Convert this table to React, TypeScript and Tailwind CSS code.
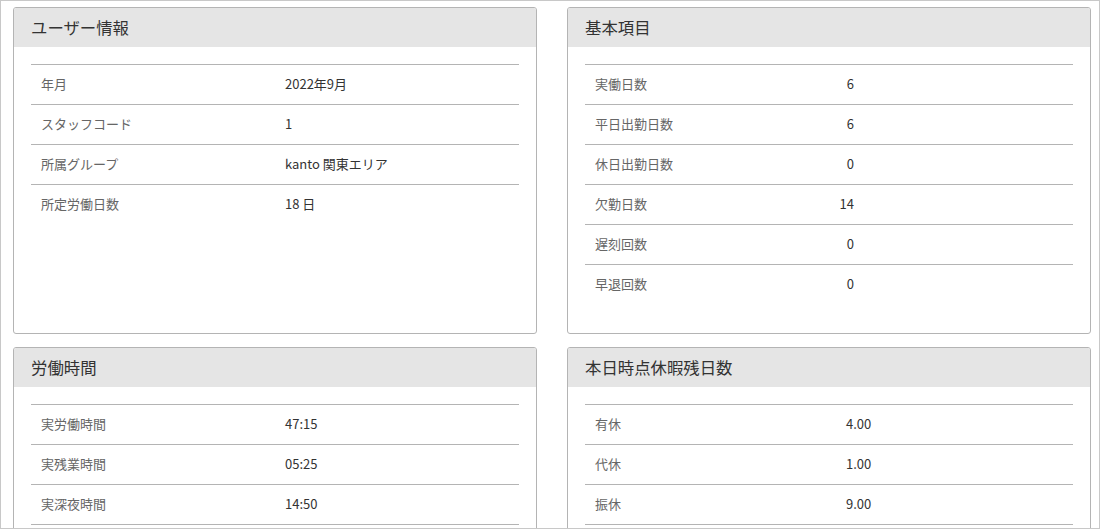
import React from 'react';

type Row = { label: string; value: string };

interface PanelProps {
  title: string;
  rows: Row[];
  valueClass: string;
  labelWidth: string;
  continues?: boolean;
}

const Panel: React.FC<PanelProps> = ({ title, rows, valueClass, labelWidth, continues }) => {
  return (
    <div className="bg-white border border-[#b4b4b4] rounded-[3px] overflow-hidden">
      <div className="bg-[#e5e5e5] h-[39px] flex items-center pb-[1px] px-[17px] text-[16.4px] text-[#333]">
        {title}
      </div>
      <div className="px-[17px] pt-[17px] pb-[29px]">
        {rows.map((row) => (
          <div key={row.label} className="flex items-center h-[40px] pb-[2px] border-t border-[#b4b4b4] text-[13px]">
            <div className={`${labelWidth} pl-[10px] text-[#666]`}>{row.label}</div>
            <div className={`${valueClass} text-[#333]`}>{row.value}</div>
          </div>
        ))}
        {continues && <div className="h-[40px] border-t border-[#b4b4b4]" />}
      </div>
    </div>
  );
};

const App: React.FC = () => {
  const userInfo = [
    { label: '年月', value: '2022年9月' },
    { label: 'スタッフコード', value: '1' },
    { label: '所属グループ', value: 'kanto 関東エリア' },
    { label: '所定労働日数', value: '18 日' },
  ];

  const basic = [
    { label: '実働日数', value: '6' },
    { label: '平日出勤日数', value: '6' },
    { label: '休日出勤日数', value: '0' },
    { label: '欠勤日数', value: '14' },
    { label: '遅刻回数', value: '0' },
    { label: '早退回数', value: '0' },
  ];

  const workTime = [
    { label: '実労働時間', value: '47:15' },
    { label: '実残業時間', value: '05:25' },
    { label: '実深夜時間', value: '14:50' },
  ];

  const leave = [
    { label: '有休', value: '4.00' },
    { label: '代休', value: '1.00' },
    { label: '振休', value: '9.00' },
  ];

  return (
    <div
      className="w-[1100px] h-[529px] border border-[#c8c8c8] overflow-hidden bg-white pl-[12px] pr-[8px] pt-[6px]"
      style={{ fontFamily: '"Noto Sans CJK JP", "Noto Sans", sans-serif' }}
    >
      <div className="grid grid-cols-2 gap-x-[30px] gap-y-[13px]">
        <Panel title="ユーザー情報" rows={userInfo} labelWidth="w-[254px]" valueClass="" />
        <Panel title="基本項目" rows={basic} labelWidth="w-[240px]" valueClass="w-[29px] text-right" />
        <Panel title="労働時間" rows={workTime} labelWidth="w-[254px]" valueClass="" continues />
        <Panel title="本日時点休暇残日数" rows={leave} labelWidth="w-[261px]" valueClass="" continues />
      </div>
    </div>
  );
};

export default App;
